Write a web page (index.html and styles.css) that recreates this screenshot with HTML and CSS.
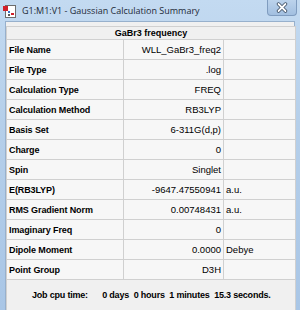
FILE: index.html
```html
<!DOCTYPE html>
<html lang="en">
<head>
    <meta charset="UTF-8">
    <title>G1:M1:V1 - Gaussian Calculation Summary</title>
    <link rel="stylesheet" href="styles.css">
</head>
<body>
    <div class="window">
        <div class="titlebar">
            <svg class="app-icon" width="14" height="15" viewBox="0 0 14 15">
                <rect x="2.5" y="1.5" width="10" height="12" fill="#fff" stroke="#6d6d6d"/>
                <rect x="0" y="2" width="5" height="5" fill="#d0202a"/>
                <rect x="5" y="7" width="2" height="2" fill="#3a6fc4"/>
                <rect x="8" y="9" width="3" height="2" fill="#d0202a"/>
                <rect x="5" y="10" width="2" height="2" fill="#5a5a5a"/>
            </svg>
            <span class="title">G1:M1:V1 - Gaussian Calculation Summary</span>
            <div class="close-btn">
                <svg width="12" height="11" viewBox="0 0 12 11">
                    <path d="M2.5 2 L9.5 9 M9.5 2 L2.5 9" stroke="#3a4a5e" stroke-width="3.4" stroke-linecap="round"/>
                    <path d="M2.5 2 L9.5 9 M9.5 2 L2.5 9" stroke="#ffffff" stroke-width="1.8" stroke-linecap="round"/>
                </svg>
            </div>
        </div>

        <div class="client">
            <table class="summary">
                <colgroup>
                    <col class="col-label">
                    <col class="col-value">
                    <col class="col-unit">
                </colgroup>
                <tr class="head">
                    <th colspan="3">GaBr3 frequency</th>
                </tr>
                <tr><td class="label">File Name</td><td class="value">WLL_GaBr3_freq2</td><td class="unit"></td></tr>
                <tr><td class="label">File Type</td><td class="value">.log</td><td class="unit"></td></tr>
                <tr><td class="label">Calculation Type</td><td class="value">FREQ</td><td class="unit"></td></tr>
                <tr><td class="label">Calculation Method</td><td class="value">RB3LYP</td><td class="unit"></td></tr>
                <tr><td class="label">Basis Set</td><td class="value">6-311G(d,p)</td><td class="unit"></td></tr>
                <tr><td class="label">Charge</td><td class="value">0</td><td class="unit"></td></tr>
                <tr><td class="label">Spin</td><td class="value">Singlet</td><td class="unit"></td></tr>
                <tr><td class="label">E(RB3LYP)</td><td class="value">-9647.47550941</td><td class="unit">a.u.</td></tr>
                <tr><td class="label">RMS Gradient Norm</td><td class="value">0.00748431</td><td class="unit">a.u.</td></tr>
                <tr><td class="label">Imaginary Freq</td><td class="value">0</td><td class="unit"></td></tr>
                <tr><td class="label">Dipole Moment</td><td class="value">0.0000</td><td class="unit">Debye</td></tr>
                <tr><td class="label">Point Group</td><td class="value">D3H</td><td class="unit"></td></tr>
                <tr class="cpu">
                    <td colspan="3">
                        <span class="cpu-label">Job cpu time:</span>
                        <span class="cpu-value">0 days&nbsp; 0 hours&nbsp; 1 minutes&nbsp; 15.3 seconds.</span>
                    </td>
                </tr>
            </table>
        </div>
    </div>
</body>
</html>
```

FILE: styles.css
```css
body {
    margin: 0;
    font-family: "Liberation Sans", Arial, sans-serif;
    font-size: 9.5px;
    color: #000;
}

.window {
    width: 300px;
    height: 310px;
    background: linear-gradient(180deg, #c3daf1 0%, #b5cfea 40%, #a9c6e6 100%);
    display: flex;
    flex-direction: column;
    overflow: hidden;
}

.titlebar {
    height: 21px;
    display: flex;
    align-items: center;
    position: relative;
    flex-shrink: 0;
}

.app-icon {
    margin-left: 3px;
    margin-top: 1px;
}

.title {
    margin-left: 5px;
    font-family: "Open Sans", "Noto Sans", sans-serif;
    font-size: 9px;
    color: #1e2a38;
}

.close-btn {
    position: absolute;
    top: 0;
    right: 3px;
    width: 30px;
    height: 16px;
    border: 1px solid #7f9cbf;
    border-top: none;
    border-radius: 0 0 4px 4px;
    background: linear-gradient(180deg, #bcd3ec, #a2bfe0);
    display: flex;
    align-items: center;
    justify-content: center;
    box-sizing: border-box;
}

.client {
    flex: 1;
    margin: 0 5px;
    background: #f0f0f0;
    border: 1px solid #97b0cc;
    border-bottom: none;
    padding: 4px 0 0 0;
}

.summary {
    border-collapse: collapse;
    width: 289px;
    table-layout: fixed;
    background: #f7f7f7;
}

.col-label {
    width: 117px;
}

.col-value {
    width: 100px;
}

.col-unit {
    width: 72px;
}

.summary th,
.summary td {
    border: 1px solid #d0d0d0;
    padding: 0;
    white-space: nowrap;
    overflow: hidden;
}

.head th {
    height: 12px;
    font-weight: bold;
    text-align: center;
    font-size: 9px;
    line-height: 12px;
    background: #f0f0f0;
}

.summary td {
    height: 19px;
}

.label {
    padding-left: 2px !important;
    font-weight: bold;
    font-size: 9px;
    letter-spacing: -0.1px;
}

.value {
    text-align: right;
    padding-right: 2px !important;
    background: #f7f7f7;
}

.unit {
    padding-left: 2px !important;
}

.cpu td {
    height: 30px;
    font-weight: bold;
    font-size: 9px;
    letter-spacing: -0.2px;
    background: #f0f0f0;
}

.cpu-label {
    margin-left: 25px;
}

.cpu-value {
    margin-left: 12px;
}
```
